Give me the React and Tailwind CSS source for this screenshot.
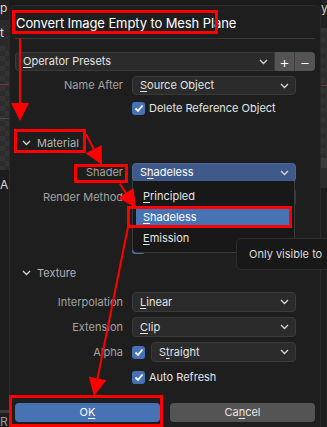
import React from "react";

const FONT = { fontFamily: "Inter, 'DejaVu Sans', sans-serif" };

function arrowHead(ax, ay, bx, by, len = 18, half = 9) {
  const dx = bx - ax;
  const dy = by - ay;
  const d = Math.hypot(dx, dy);
  const ux = dx / d;
  const uy = dy / d;
  const cx = bx - ux * len;
  const cy = by - uy * len;
  return {
    line: [ax, ay, cx, cy],
    pts: `${bx},${by} ${cx - uy * half},${cy + ux * half} ${cx + uy * half},${cy - ux * half}`,
  };
}

const ARROWS = [
  [20, 38, 20, 121],
  [86, 134, 102, 165],
  [120, 184, 136, 208],
  [128, 227, 94, 396],
];

function Chevron({ className = "" }) {
  return (
    <svg width="9" height="6" viewBox="0 0 9 6" className={className}>
      <polyline points="1,1 4.5,4.5 8,1" fill="none" stroke="#d6d6d6" strokeWidth="1.3" />
    </svg>
  );
}

function Check() {
  return (
    <span className="flex h-[13px] w-[13px] shrink-0 items-center justify-center rounded-[3px] bg-[#4772b3]">
      <svg width="10" height="9" viewBox="0 0 10 9">
        <polyline points="1.5,4.5 4,7 8.5,1.5" fill="none" stroke="#ffffff" strokeWidth="1.8" />
      </svg>
    </span>
  );
}

// label text with one underlined letter (Blender accelerator)
function Acc({ pre = "", u, post = "" }) {
  return (
    <span>
      {pre}
      <span className="underline underline-offset-2 decoration-1">{u}</span>
      {post}
    </span>
  );
}

function Field({ children, active = false, className = "" }) {
  return (
    <div
      className={`flex h-[19px] items-center justify-between rounded-[4px] border pl-[7px] pr-[6px] text-[11px] ${
        active ? "border-[#4a6797] bg-[#3f5a8a] text-white" : "border-[#3a3a3a] bg-[#2b2b2b] text-[#e4e4e4]"
      } ${className}`}
    >
      {children}
      <Chevron />
    </div>
  );
}

function Row({ label, children, className = "" }) {
  return (
    <div className={`flex items-center ${className}`}>
      <div className="w-[113px] shrink-0 text-right text-[11px] text-[#a3a3a3]">{label}</div>
      <div className="ml-[9px] flex w-[164px] items-center">{children}</div>
    </div>
  );
}

function CheckRow({ text, className = "" }) {
  return (
    <Row label="" className={`h-[13px] ${className}`}>
      <Check />
      {text && <span className="ml-[4px] text-[11px] text-[#e4e4e4]">{text}</span>}
    </Row>
  );
}

function Header({ children, className = "" }) {
  return (
    <div className={`flex h-[14px] items-center pl-[12px] text-[11px] text-[#b4b4b4] ${className}`}>
      <Chevron className="mr-[6px]" />
      {children}
    </div>
  );
}

export default function App() {
  return (
    <div className="relative flex h-[427px] w-[327px] overflow-hidden bg-[#1b1b1b]" style={FONT}>
      {/* viewport behind, left */}
      <div className="flex w-[9px] shrink-0 flex-col text-[12px] text-[#d8d8d8]">
        <div className="h-[20px] bg-[#222222] leading-[16px]">p</div>
        <div className="h-[26px] bg-[#2a2a2a] leading-[26px]">t</div>
        <div className="relative h-[124px] bg-[repeating-conic-gradient(#2c2c2c_0_25%,#333333_0_50%)] bg-[length:10px_10px]">
          <div className="absolute left-0 right-0 top-[38px] h-[1px] bg-[#7a3434]" />
          <div className="absolute left-0 right-0 top-[72px] h-[1px] bg-[#4a4a4a]" />
        </div>
        <div className="h-[30px] bg-[#1d1d1d] pt-[8px] leading-[14px]">A</div>
        <div className="flex-1 bg-[#1d1d1d]" />
        <div className="h-[3px] bg-[#3c3c3c]" />
        <div className="h-[14px] bg-[#1d1d1d] leading-[18px] text-[#9a9a9a]">R</div>
      </div>

      {/* dialog */}
      <div className="mt-[5px] flex w-[312px] shrink-0 flex-col rounded-tl-[6px] rounded-tr-[6px] border border-b-0 border-[#2a2a2a] bg-[#1e1e1e]">
        <div className="flex h-[32px] items-center pl-[6px] pt-[3px] text-[13px] tracking-[-0.1px] text-white">Convert Image Empty to Mesh Plane</div>
        <div className="mx-[5px] h-[1px] bg-[#383838]" />

        <div className="mx-[5px] mt-[13px] flex h-[19px] rounded-[4px]">
          <div className="flex flex-1 items-center justify-between rounded-l-[4px] border border-[#3a3a3a] bg-[#2b2b2b] pl-[7px] pr-[6px] text-[11px] text-[#e4e4e4]">
            <Acc u="O" post="perator Presets" />
            <Chevron />
          </div>
          <div className="flex w-[20px] items-center justify-center border-r border-[#3f3f3f] bg-[#545454] text-[16px] font-light text-white">+</div>
          <div className="flex w-[20px] items-center justify-center rounded-r-[4px] bg-[#545454] text-[16px] font-light text-white">−</div>
        </div>

        <Row label="Name After" className="mt-[5px]">
          <Field className="w-full">
            <Acc u="S" post="ource Object" />
          </Field>
        </Row>
        <CheckRow text="Delete Reference Object" className="mt-[7px]" />

        <Header className="mt-[21px]">Material</Header>

        <Row label="Shader" className="mt-[13px]">
          <Field active className="w-full">
            <Acc pre="S" u="h" post="adeless" />
          </Field>
        </Row>
        {/* these rows sit under the open menu */}
        <Row label="Render Method" className="mt-[6px]">
          <Field className="w-full">
            <span />
          </Field>
        </Row>
        <CheckRow className="mt-[9px]" />
        <CheckRow className="mt-[12px]" />

        <Header className="mt-[12px]">Texture</Header>

        <Row label="Interpolation" className="mt-[12px]">
          <Field className="h-[20px] w-full">
            <Acc u="L" post="inear" />
          </Field>
        </Row>
        <Row label="Extension" className="mt-[5px]">
          <Field className="h-[20px] w-full">
            <Acc u="C" post="lip" />
          </Field>
        </Row>
        <Row label="Alpha" className="mt-[5px]">
          <Check />
          <Field className="ml-[6px] h-[20px] flex-1">
            <Acc pre="S" u="t" post="raight" />
          </Field>
        </Row>
        <CheckRow text="Auto Refresh" className="mt-[9px]" />

        <div className="mx-[5px] mt-[19px] flex gap-[10px]">
          <div className="flex h-[19px] flex-1 items-center justify-center rounded-[4px] bg-[#4772b3] text-[11px] text-white">
            <Acc pre="O" u="K" />
          </div>
          <div className="flex h-[19px] flex-1 items-center justify-center rounded-[4px] bg-[#545454] text-[11px] text-[#e8e8e8]">
            <Acc pre="Ca" u="n" post="cel" />
          </div>
        </div>
      </div>

      {/* viewport behind, right */}
      <div className="flex flex-1 flex-col text-[12px] text-[#c8c8c8]">
        <div className="h-[28px] bg-[#222222] leading-[16px]">y</div>
        <div className="relative h-[130px] bg-[repeating-conic-gradient(#2c2c2c_0_25%,#333333_0_50%)] bg-[length:10px_10px]">
          <div className="absolute left-0 right-0 top-[57px] h-[1px] bg-[#7a3434]" />
        </div>
        <div className="h-[10px] bg-[#3a3a3a]" />
        <div className="h-[20px] bg-[#2b2b2b]" />
        <div className="flex-1 bg-[#1d1d1d]" />
      </div>

      {/* dropdown menu of Shader */}
      <div className="absolute left-[132px] top-[181px] flex h-[72px] w-[163px] flex-col rounded-b-[5px] border border-t-0 border-[#3a3a3a] bg-[#181818] px-[3px] pt-[4px] text-[11px] text-[#e4e4e4]">
        <div className="flex h-[22px] items-center pl-[7px]">
          <Acc u="P" post="rincipled" />
        </div>
        <div className="flex h-[20px] items-center rounded-[3px] bg-[#4772b3] pl-[7px] text-white">
          <Acc u="S" post="hadeless" />
        </div>
        <div className="flex h-[22px] items-center pl-[7px]">
          <Acc u="E" post="mission" />
        </div>
      </div>

      {/* tooltip */}
      <div className="absolute left-[236px] top-[238px] flex h-[32px] w-[110px] items-center rounded-[5px] border border-[#2e2e2e] bg-[#181818] pl-[12px] text-[11px] text-[#dcdcdc]">
        Only visible to
      </div>

      {/* red annotation boxes */}
      <div className="absolute left-[12px] top-[10px] h-[24px] w-[206px] border-[3px] border-[#ff0000]" />
      <div className="absolute left-[14px] top-[129px] h-[24px] w-[72px] border-[3px] border-[#ff0000]" />
      <div className="absolute left-[74px] top-[164px] h-[19px] w-[54px] border-[3px] border-[#ff0000]" />
      <div className="absolute left-[127px] top-[206px] h-[22px] w-[165px] border-[3px] border-[#ff0000]" />
      <div className="absolute left-[9px] top-[395px] h-[32px] w-[154px] border-[3px] border-[#ff0000]" />

      {/* red arrows */}
      <svg className="pointer-events-none absolute inset-0" width="327" height="427">
        {ARROWS.map(([ax, ay, bx, by], i) => {
          const h = arrowHead(ax, ay, bx, by);
          return (
            <g key={i}>
              <line x1={h.line[0]} y1={h.line[1]} x2={h.line[2]} y2={h.line[3]} stroke="#ff0000" strokeWidth="2" />
              <polygon points={h.pts} fill="#ff0000" />
            </g>
          );
        })}
      </svg>
    </div>
  );
}
